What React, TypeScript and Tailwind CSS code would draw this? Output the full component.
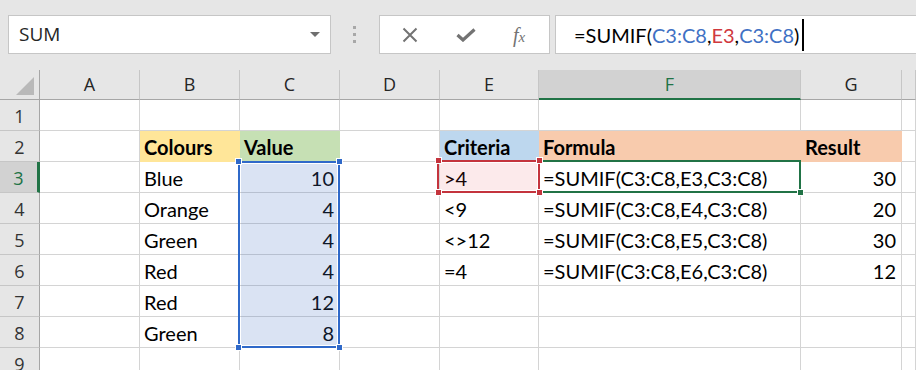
import React from "react";

/* Excel sheet: SUMIF example with range highlights. */

type Cell = {
  text?: string;
  bold?: boolean;
  right?: boolean;
  fill?: string;
};

const COLS = ["A", "B", "C", "D", "E", "F", "G", ""];
const COL_WIDTHS = "40px 100px 100px 100px 100px 99px 262px 101px 1fr";

const FILLS: Record<string, string> = {
  yellow: "bg-[#ffe699] border-[#ffe699]",
  green: "bg-[#c6e0b4] border-[#c6e0b4]",
  blue: "bg-[#bdd7ee] border-[#bdd7ee]",
  peach: "bg-[#f8cbad] border-[#f8cbad]",
};

// sheet row number -> column letter -> cell
const DATA: Record<number, Record<string, Cell>> = {
  2: {
    B: { text: "Colours", bold: true, fill: "yellow" },
    C: { text: "Value", bold: true, fill: "green" },
    E: { text: "Criteria", bold: true, fill: "blue" },
    F: { text: "Formula", bold: true, fill: "peach" },
    G: { text: "Result", bold: true, fill: "peach" },
  },
  3: {
    B: { text: "Blue" },
    C: { text: "10", right: true },
    E: { text: ">4" },
    F: { text: "=SUMIF(C3:C8,E3,C3:C8)" },
    G: { text: "30", right: true },
  },
  4: {
    B: { text: "Orange" },
    C: { text: "4", right: true },
    E: { text: "<9" },
    F: { text: "=SUMIF(C3:C8,E4,C3:C8)" },
    G: { text: "20", right: true },
  },
  5: {
    B: { text: "Green" },
    C: { text: "4", right: true },
    E: { text: "<>12" },
    F: { text: "=SUMIF(C3:C8,E5,C3:C8)" },
    G: { text: "30", right: true },
  },
  6: {
    B: { text: "Red" },
    C: { text: "4", right: true },
    E: { text: "=4" },
    F: { text: "=SUMIF(C3:C8,E6,C3:C8)" },
    G: { text: "12", right: true },
  },
  7: { B: { text: "Red" }, C: { text: "12", right: true } },
  8: { B: { text: "Green" }, C: { text: "8", right: true } },
};

function Handle({ pos, color }: { pos: string; color: string }) {
  return (
    <span
      className={`absolute h-[7px] w-[7px] border border-white ${pos} ${color}`}
    />
  );
}

function TopBar() {
  return (
    <div className="flex h-[70px] items-start bg-[#e6e6e6] pt-[15px] font-['Open_Sans',sans-serif]">
      <div className="ml-[8px] flex h-[39px] w-[323px] items-center justify-between border border-[#c6c6c6] bg-white pl-[10px] pr-[10px]">
        <span className="text-[19px] text-[#262626]">SUM</span>
        <span className="h-0 w-0 border-x-[5px] border-t-[5px] border-x-transparent border-t-[#6f6f6f]" />
      </div>
      <div className="ml-[22px] mt-[11px] flex w-[3px] flex-col gap-[4px]">
        <span className="h-[3px] w-[3px] bg-[#a8a8a8]" />
        <span className="h-[3px] w-[3px] bg-[#a8a8a8]" />
        <span className="h-[3px] w-[3px] bg-[#a8a8a8]" />
      </div>
      <div className="ml-[23px] flex h-[39px] w-[171px] items-center border border-[#c6c6c6] bg-white">
        <svg width="16" height="16" viewBox="0 0 16 16" className="ml-[22px]">
          <path d="M1.5 1.5 L14.5 14.5 M14.5 1.5 L1.5 14.5" stroke="#737373" strokeWidth="2" fill="none" />
        </svg>
        <svg width="20" height="14" viewBox="0 0 20 14" className="ml-[38px]">
          <path d="M1.5 7 L7 12 L18.5 1.5" stroke="#737373" strokeWidth="3.2" fill="none" />
        </svg>
        <span className="ml-[37px] font-['Liberation_Serif',serif] text-[20px] italic leading-none text-[#737373]">
          f<span className="text-[15px]">x</span>
        </span>
      </div>
      <div className="ml-[5px] flex h-[39px] flex-1 items-center border border-r-0 border-[#c6c6c6] bg-white pl-[18px] font-['Lato',sans-serif] text-[20px] text-black">
        <span>=SUMIF(</span>
        <span className="text-[#3f71c4]">C3:C8</span>
        <span>,</span>
        <span className="text-[#d0393e]">E3</span>
        <span>,</span>
        <span className="text-[#3f71c4]">C3:C8</span>
        <span>)</span>
        <span className="ml-[3px] h-[32px] w-[2px] bg-black" />
      </div>
    </div>
  );
}

export default function App() {
  const rows = [1, 2, 3, 4, 5, 6, 7, 8, 9];
  return (
    <div className="h-[370px] w-[916px] overflow-hidden bg-white">
      <TopBar />
      <div
        className="relative grid bg-white font-['Lato',sans-serif] text-[20px] text-black"
        style={{ gridTemplateColumns: COL_WIDTHS, gridAutoRows: "31px", gridTemplateRows: "30px" }}
      >
        {/* corner */}
        <div className="relative border-b border-r border-[#a6a6a6] bg-[#e6e6e6]" style={{ gridColumn: 1, gridRow: 1 }}>
          <span className="absolute bottom-[4px] right-[5px] h-0 w-0 border-b-[18px] border-l-[18px] border-b-[#b9b9b9] border-l-transparent" />
        </div>
        {COLS.map((c, i) => {
          const sel = c === "F";
          return (
            <div
              key={"h" + i}
              style={{ gridColumn: i + 2, gridRow: 1 }}
              className={`flex items-center justify-center border-r font-['Open_Sans',sans-serif] text-[18px] ${
                sel
                  ? "border-b-2 border-r-[#c6c6c6] border-b-[#217346] bg-[#d2d2d2] text-[#217346]"
                  : "border-b border-r-[#c6c6c6] border-b-[#a6a6a6] bg-[#e6e6e6] text-[#262626]"
              }`}
            >
              {c}
            </div>
          );
        })}
        {rows.map((r) => (
          <React.Fragment key={r}>
            <div
              style={{ gridColumn: 1, gridRow: r + 1 }}
              className={`flex items-center justify-center border-b border-[#c6c6c6] pt-[3px] font-['Open_Sans',sans-serif] text-[18px] ${
                r === 3
                  ? "border-r-[3px] border-r-[#217346] bg-[#d2d2d2] text-[#217346]"
                  : "border-r border-r-[#a6a6a6] bg-[#e6e6e6] text-[#333333]"
              }`}
            >
              {r}
            </div>
            {COLS.map((c, i) => {
              const cell = DATA[r]?.[c];
              const fill = cell?.fill ? FILLS[cell.fill] : "border-[#d4d4d4]";
              return (
                <div
                  key={r + "-" + i}
                  style={{ gridColumn: i + 2, gridRow: r + 1 }}
                  className={`flex items-end overflow-hidden whitespace-nowrap border-b border-r pb-[2px] leading-[24px] ${fill} ${
                    cell?.right ? "justify-end pr-[5px]" : "pl-[4px]"
                  } ${cell?.bold ? "font-bold" : ""}`}
                >
                  {cell?.text}
                </div>
              );
            })}
          </React.Fragment>
        ))}

        {/* C3:C8 range highlight */}
        <div className="pointer-events-none relative" style={{ gridColumn: 4, gridRow: "4 / span 6" }}>
          <div className="absolute -left-[2px] -top-[1px] bottom-0 right-0 border-2 border-[#2f69c9] p-px">
            <div className="h-full w-full bg-[#4472c4]/20" />
          </div>
          <Handle pos="-left-[5px] -top-[4px]" color="bg-[#2f69c9]" />
          <Handle pos="-right-[3px] -top-[4px]" color="bg-[#2f69c9]" />
          <Handle pos="-left-[5px] -bottom-[3px]" color="bg-[#2f69c9]" />
          <Handle pos="-right-[3px] -bottom-[3px]" color="bg-[#2f69c9]" />
        </div>

        {/* F3 active cell */}
        <div className="pointer-events-none relative" style={{ gridColumn: 7, gridRow: 4 }}>
          <div className="absolute -left-[1px] -top-[2px] bottom-0 right-0 border-2 border-[#217346]" />
          <span className="absolute -bottom-[3px] -right-[3px] h-[7px] w-[7px] border border-white bg-[#217346]" />
        </div>

        {/* E3 criteria highlight */}
        <div className="pointer-events-none relative" style={{ gridColumn: 6, gridRow: 4 }}>
          <div className="absolute -left-[3px] -top-[2px] bottom-0 -right-[1px] border-2 border-[#c4343d] p-px">
            <div className="h-full w-full bg-[#e0333c]/10" />
          </div>
          <Handle pos="-left-[5px] -top-[5px]" color="bg-[#c4343d]" />
          <Handle pos="-right-[4px] -top-[5px]" color="bg-[#c4343d]" />
          <Handle pos="-left-[5px] -bottom-[3px]" color="bg-[#c4343d]" />
          <Handle pos="-right-[4px] -bottom-[3px]" color="bg-[#c4343d]" />
        </div>
      </div>
    </div>
  );
}
